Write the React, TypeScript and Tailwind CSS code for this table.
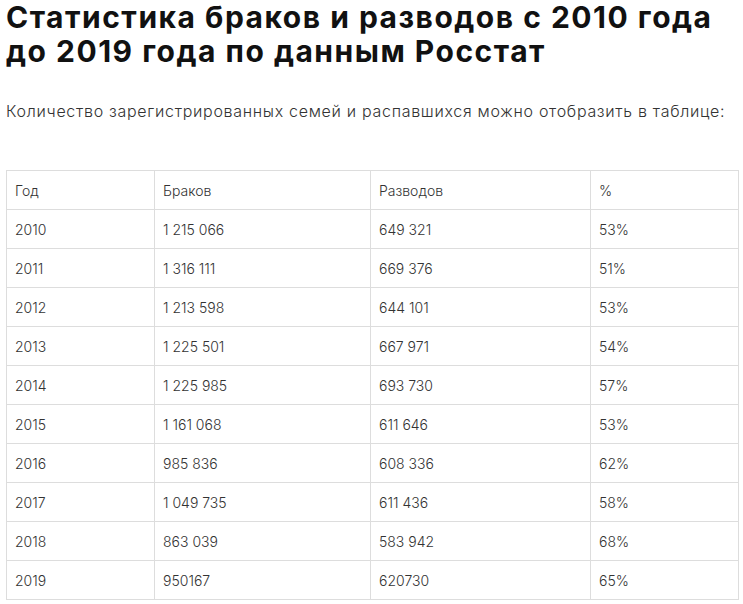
const rows: [string, string, string, string][] = [
  ["2010", "1 215 066", "649 321", "53%"],
  ["2011", "1 316 111", "669 376", "51%"],
  ["2012", "1 213 598", "644 101", "53%"],
  ["2013", "1 225 501", "667 971", "54%"],
  ["2014", "1 225 985", "693 730", "57%"],
  ["2015", "1 161 068", "611 646", "53%"],
  ["2016", "985 836", "608 336", "62%"],
  ["2017", "1 049 735", "611 436", "58%"],
  ["2018", "863 039", "583 942", "68%"],
  ["2019", "950167", "620730", "65%"],
]

const cell = "border border-[#dddddd] h-[39px] px-2 align-middle text-left font-light"

export default function App() {
  return (
    <div className="bg-white px-[6px] pt-0 text-[#1a1a1a] font-['Inter','Noto_Sans',sans-serif]">
      <h1 className="text-[30px] leading-[34px] font-bold tracking-[1.5px] text-[#111111]">
        Статистика браков и разводов с 2010 года
        <br />
        до 2019 года по данным Росстат
      </h1>
      <p className="mt-[31px] text-[16px] leading-6 font-light text-[#333333] tracking-[0.7px]">
        Количество зарегистрированных семей и распавшихся можно отобразить в таблице:
      </p>
      <table className="mt-[47px] w-[732px] border-collapse table-fixed text-[14px] text-[#333333]">
        <colgroup>
          <col className="w-[148px]" />
          <col className="w-[216px]" />
          <col className="w-[220px]" />
          <col className="w-[148px]" />
        </colgroup>
        <thead>
          <tr>
            <td className={cell}>Год</td>
            <td className={cell}>Браков</td>
            <td className={cell}>Разводов</td>
            <td className={cell}>%</td>
          </tr>
        </thead>
        <tbody>
          {rows.map((r) => (
            <tr key={r[0]}>
              {r.map((v, i) => (
                <td key={i} className={cell}>
                  {v}
                </td>
              ))}
            </tr>
          ))}
        </tbody>
      </table>
    </div>
  )
}
